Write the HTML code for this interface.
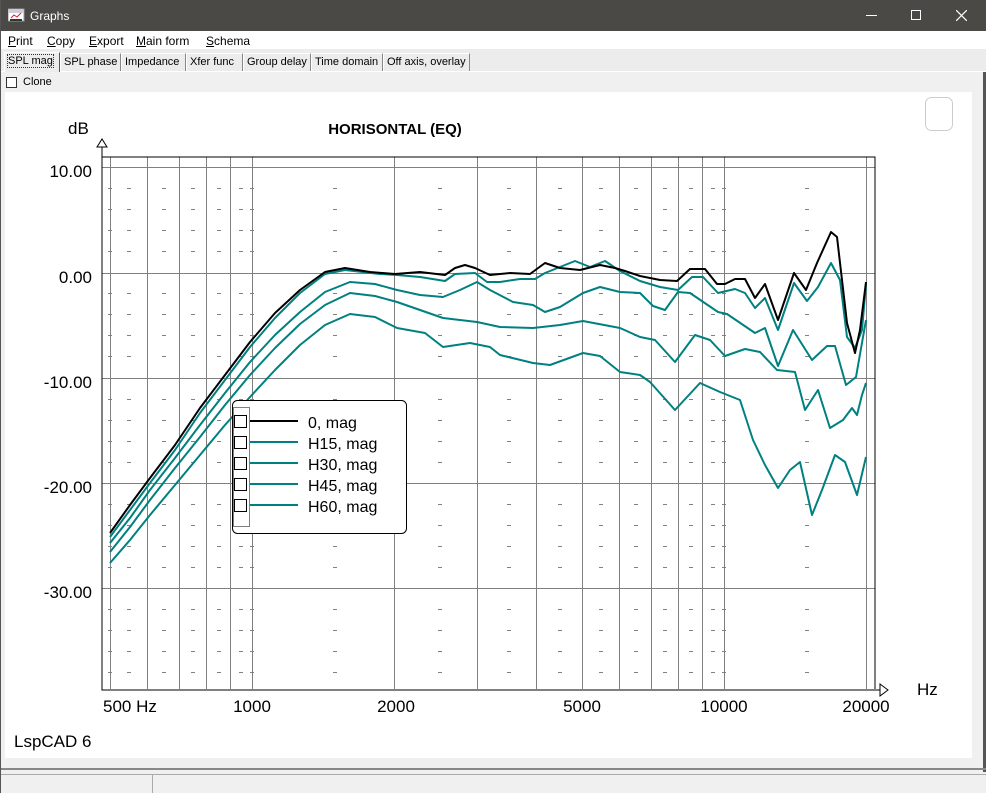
<!DOCTYPE html>
<html><head><meta charset="utf-8">
<style>
*{margin:0;padding:0;box-sizing:border-box}
body{width:986px;height:793px;overflow:hidden;background:#f0f0f0;font-family:"Liberation Sans",Arial,sans-serif;position:relative}
.tb{position:absolute;left:0;top:0;width:986px;height:31px;background:#4b4946;color:#fff;font-size:12px}
.menu{position:absolute;left:0;top:31px;width:986px;height:18px;background:#fff;font-size:12px}
.menu span{position:absolute;top:3px;white-space:nowrap}
.tabs{position:absolute;left:0;top:49px;width:986px;height:23px;background:#ececec;border-bottom:1px solid #fff}
.tab{position:absolute;top:4px;height:18px;font-size:11px;padding:2px 3px;border-left:1px solid #fff;border-right:1px solid #888;border-top:1px solid #fff;background:#ececec;white-space:nowrap;overflow:hidden}
.u{text-decoration:underline}
</style></head><body>
<div class="tb">
<svg style="position:absolute;left:8px;top:8px" width="17" height="15"><rect x="0" y="1" width="16" height="12" fill="#fff" stroke="#999"/><rect x="1" y="2" width="14" height="3" fill="#ccd"/><path d="M3 10 L6 7 L9 9 L13 5" stroke="#d22" fill="none"/><rect x="2" y="11" width="12" height="2" fill="#333"/></svg>
<span style="position:absolute;left:30px;top:9px">Graphs</span>
<div style="position:absolute;left:866px;top:15px;width:11px;height:1px;background:#fff"></div>
<div style="position:absolute;left:911px;top:10px;width:10px;height:10px;border:1px solid #fff"></div>
<svg style="position:absolute;left:956px;top:10px" width="11" height="11"><path d="M0 0L11 11M11 0L0 11" stroke="#fff" stroke-width="1.2"/></svg>
</div>
<div class="menu">
<span style="left:8px"><span class="u" style="position:static">P</span>rint</span>
<span style="left:47px"><span class="u" style="position:static">C</span>opy</span>
<span style="left:89px"><span class="u" style="position:static">E</span>xport</span>
<span style="left:136px"><span class="u" style="position:static">M</span>ain form</span>
<span style="left:206px"><span class="u" style="position:static">S</span>chema</span>
</div>
<div class="tabs">
<div class="tab" style="left:4px;top:3px;height:20px;width:56px;border-right:1px solid #555"><span style="outline:1px dotted #333">SPL mag</span></div>
<div class="tab" style="left:60px;width:61px">SPL phase</div>
<div class="tab" style="left:121px;width:65px">Impedance</div>
<div class="tab" style="left:186px;width:57px">Xfer func</div>
<div class="tab" style="left:243px;width:68px">Group delay</div>
<div class="tab" style="left:311px;width:72px">Time domain</div>
<div class="tab" style="left:383px;width:87px">Off axis, overlay</div>
</div>
<div style="position:absolute;left:6px;top:77px;width:11px;height:11px;border:1px solid #333;background:#fff"></div>
<span style="position:absolute;left:23px;top:76px;font-size:11px">Clone</span>
<div style="position:absolute;left:5px;top:92px;width:967px;height:666px;background:#fff"></div>
<div style="position:absolute;left:983px;top:72px;width:3px;height:700px;background:#555"></div>
<div style="position:absolute;left:0;top:768px;width:986px;height:2px;background:#888"></div>
<div style="position:absolute;left:0;top:774px;width:986px;height:1px;background:#aaa"></div>
<div style="position:absolute;left:152px;top:774px;width:1px;height:19px;background:#aaa"></div>
<div style="position:absolute;left:0;top:0;width:1px;height:793px;background:#555"></div>
<svg id="g" style="position:absolute;left:0;top:0" width="986" height="793">
<g id="grid"></g>
<path d="M102 157H875V689M102 145V690H886" stroke="#000" fill="none"/>
<path d="M97 147L102 139L107 147Z" fill="#fff" stroke="#000"/>
<path d="M880 684L888 690L880 696Z" fill="#fff" stroke="#000"/>
<g font-family="Liberation Sans,Arial,sans-serif" font-size="17" text-anchor="end">
<text x="92" y="177">10.00</text><text x="92" y="283">0.00</text><text x="92" y="388">-10.00</text><text x="92" y="493">-20.00</text><text x="92" y="598">-30.00</text>
</g>
<g font-family="Liberation Sans,Arial,sans-serif" font-size="17" text-anchor="middle">
<text x="110" y="712" text-anchor="start" dx="-7">500 Hz</text><text x="252" y="712">1000</text><text x="396" y="712">2000</text><text x="582" y="712">5000</text><text x="724" y="712">10000</text><text x="866" y="712">20000</text>
</g>
<text x="917" y="695" font-family="Liberation Sans,Arial,sans-serif" font-size="17">Hz</text>
<text x="68" y="134" font-family="Liberation Sans,Arial,sans-serif" font-size="17">dB</text>
<text x="395" y="134" font-family="Liberation Sans,Arial,sans-serif" font-size="15" font-weight="bold" text-anchor="middle">HORISONTAL (EQ)</text>
<text x="14" y="747" font-family="Liberation Sans,Arial,sans-serif" font-size="17">LspCAD 6</text>
<rect x="925.5" y="97.5" width="27" height="33" rx="6" fill="#fff" stroke="#ccc"/>
<g fill="none" stroke-width="2" stroke-linejoin="round">
<polyline stroke="#008080" points="110,563 130,540 150,515 175,485 200,455 225,425 250,397 275,370 300,345 325,325 350,314 375,317 397,328 425,333 443,347 470,343 490,347 500,355 533,363 550,365 583,353 600,356 620,372 640,375 650,382 675,410 700,383 720,392 740,400 753,440 765,465 778,488 790,470 800,462 812,515 822,490 835,455 845,462 857,495 866,457"/>
<polyline stroke="#008080" points="110,552 130,527 150,500 175,468 200,437 225,405 250,375 275,348 300,324 325,305 350,293 375,296 397,302 420,310 443,318 477,322 500,327 533,328 560,325 583,321 620,328 640,337 655,340 675,362 695,335 710,340 725,356 745,349 760,352 777,370 795,372 805,410 818,390 830,428 843,420 852,408 857,415 862,395 866,383"/>
<polyline stroke="#008080" points="110,543 130,518 150,490 175,458 200,425 225,393 250,362 275,335 300,312 325,292 350,282 375,284 397,290 420,295 443,297 460,290 477,282 490,290 513,302 533,305 545,312 560,307 583,293 600,287 620,292 640,293 653,306 665,310 678,292 690,293 718,312 727,314 755,333 765,328 778,366 793,330 812,360 827,346 835,346 846,385 856,377 866,320"/>
<polyline stroke="#008080" points="110,537 130,510 150,483 175,450 200,413 225,380 250,347 275,318 300,293 325,274 345,270 380,274 397,275 420,277 445,281 455,274 475,273 487,282 500,282 520,279 535,279 545,273 575,261 590,267 605,261 620,271 640,281 660,287 678,290 692,277 703,277 718,293 735,289 745,293 755,308 765,298 778,330 794,283 807,301 818,287 831,263 840,280 847,337 855,348 862,330 866,284"/>
<polyline stroke="#000" points="110,533 130,505 150,478 175,445 200,408 225,375 250,342 275,313 300,290 325,272 345,268 370,272 395,274 420,272 445,275 455,268 465,265 475,268 490,275 510,273 530,274 545,263 560,268 580,270 600,265 615,268 625,271 640,276 660,280 677,281 690,269 705,269 717,284 725,284 735,279 745,279 755,298 765,284 778,320 794,273 806,290 817,263 831,232 837,237 847,323 855,353 860,330 866,282"/>
</g>
<rect x="232.5" y="400.5" width="174" height="133" rx="5" fill="#fff" stroke="#000"/>
<rect x="233.5" y="407.5" width="16" height="119" fill="none" stroke="#000" stroke-dasharray="1,1"/>
<g fill="#fff" stroke="#000"><rect x="234.5" y="415.5" width="12" height="12"/><rect x="234.5" y="436.5" width="12" height="12"/><rect x="234.5" y="457.5" width="12" height="12"/><rect x="234.5" y="478.5" width="12" height="12"/><rect x="234.5" y="499.5" width="12" height="12"/></g>
<g stroke-width="2"><path d="M250 421H298" stroke="#000"/><path d="M250 442H298M250 463H298M250 484H298M250 505H298" stroke="#008080"/></g>
<g font-family="Liberation Sans,Arial,sans-serif" font-size="16"><text x="308" y="428">0, mag</text><text x="308" y="449">H15, mag</text><text x="308" y="470">H30, mag</text><text x="308" y="491">H45, mag</text><text x="308" y="512">H60, mag</text></g>
</svg>
<script>
var g=document.getElementById('grid'),s='';
function X(f){return 252+472*Math.log10(f/1000);}
var fs=[500,600,700,800,900,1000,2000,3000,4000,5000,6000,7000,8000,9000,10000,20000];
fs.forEach(function(f){var x=Math.round(X(f))+.5;s+='<path d="M'+x+' 157V689" stroke="#808080"/>';});
[167,273,378,483,588].forEach(function(y){s+='<path d="M102 '+(y+.5)+'H875" stroke="#808080"/>';});
var ds=[500,550,650,750,850,950,1000,1500,2500,3500,4500,5500,6500,7500,8500,9500,10000,15000];
for(var k=0;k<26;k++){var y=167+k*21.05;if(k%5==0)continue;y=Math.round(y)+.5;
ds.forEach(function(f){var x=Math.round(X(f));s+='<path d="M'+(x-2)+' '+y+'H'+(x+2)+'" stroke="#808080"/>';});}
g.innerHTML=s;
</script>
</body></html>
